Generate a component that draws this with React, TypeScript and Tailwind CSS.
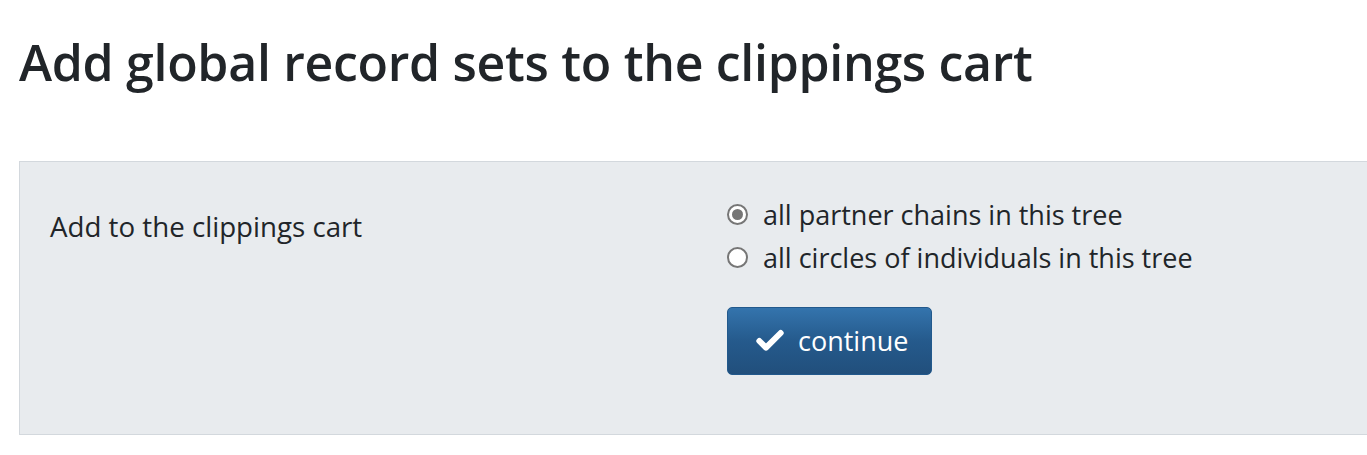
import { Check } from 'lucide-react';

function Radio({ checked }: { checked?: boolean }) {
  return (
    <span className="flex h-[21px] w-[21px] shrink-0 items-center justify-center rounded-full border-2 border-[#767676] bg-white">
      {checked && <span className="h-[11px] w-[11px] rounded-full bg-[#767676]" />}
    </span>
  );
}

export default function App() {
  return (
    <div className="w-[1367px] h-[455px] overflow-hidden bg-white text-[#212529] [font-family:'Open_Sans',sans-serif]">
      <div className="pl-[19px] pt-[22px]">
        <h1 className="text-[50px] leading-[80px] font-semibold tracking-[-0.3px]">
          Add global record sets to the clippings cart
        </h1>

        <form className="mt-[59px] w-[1400px] h-[274px] border border-[#d3d8dd] bg-[#e8ebee] flex">
          <div className="w-[707px] pl-[30px] pt-[46px] text-[27.7px] leading-[36px]">
            Add to the clippings cart
          </div>
          <div className="pt-[31px]">
            <label className="flex items-center gap-[15px] text-[27px] leading-[43px]">
              <Radio checked />
              all partner chains in this tree
            </label>
            <label className="flex items-center gap-[15px] text-[27px] leading-[43px]">
              <Radio />
              all circles of individuals in this tree
            </label>
            <button
              type="button"
              className="mt-[28px] flex h-[68px] w-[205px] items-center gap-[12px] rounded-[5px] border border-[#22598c] bg-gradient-to-b from-[#3474ad] via-[#255a8c] to-[#214f7c] pl-[26px] text-[27px] text-white"
            >
              <Check className="h-[32px] w-[32px]" strokeWidth={4.5} />
              continue
            </button>
          </div>
        </form>
      </div>
    </div>
  );
}
